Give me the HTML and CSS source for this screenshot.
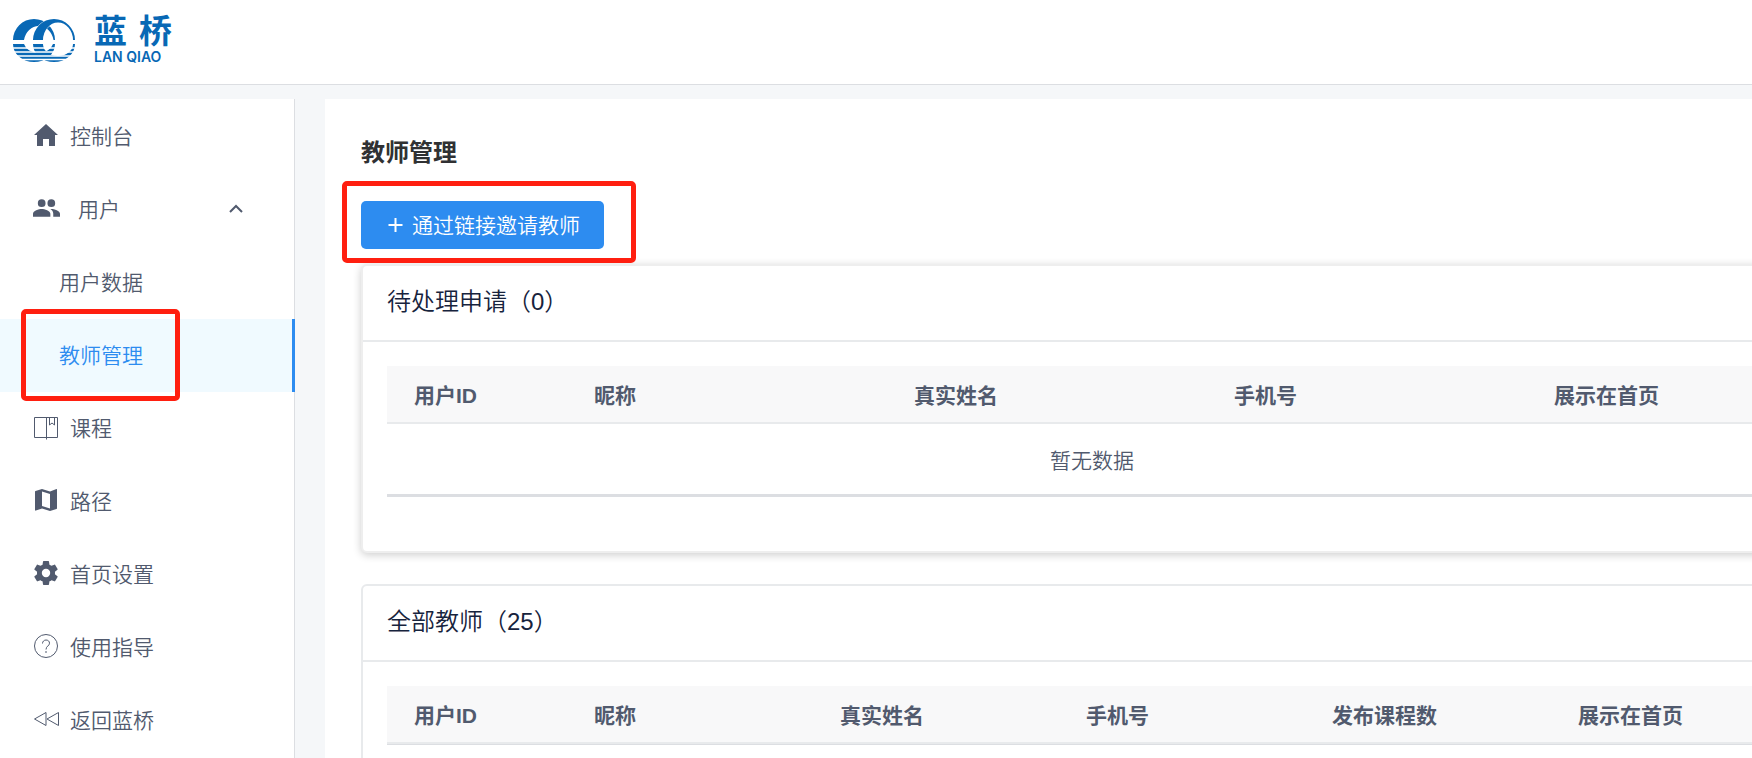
FILE: index.html
```html
<!DOCTYPE html>
<html lang="zh-CN">
<head>
    <meta charset="UTF-8">
    <meta name="viewport" content="width=device-width, initial-scale=1.0">
    <title>教师管理 - 蓝桥</title>
    <link rel="stylesheet" href="styles.css">
</head>
<body>
    <header class="header">
        <a class="logo" href="#">
            <svg class="logo-mark" viewBox="0 0 64 46" aria-hidden="true">
                <path d="M1 22A21 21 0 0 1 43 22H41.500A15 17 0 0 0 12 22z"/>
                <path class="ring-front" d="M21 22A21 21 0 0 1 63 22H61A15 17.500 0 0 0 31 22z"/>
                <path d="M1 26A21 18 0 0 0 43 26H41A15 12 0 0 1 12 26z"/>
                <path d="M21 26A21 18 0 0 0 63 26H61A15 12 0 0 1 31 26z"/>
                <path class="waves" d="M0 30h64M0 34h64M0 38h64M0 41.500h64"/>
            </svg>
            <span class="logo-text">
                <strong class="logo-cn"><span>蓝</span><span>桥</span></strong>
                <span class="logo-en">LAN QIAO</span>
            </span>
        </a>
    </header>

    <div class="layout">
        <nav class="sidebar">
            <a class="menu-item" href="#">
                <svg class="icon" viewBox="0 0 24 24"><path d="M12 1L0 12h3v11h6v-7h6v7h6V12h3z"/></svg>
                控制台
            </a>
            <button class="menu-item submenu" type="button" aria-expanded="true">
                <svg class="icon icon-users" viewBox="0 0 28 24"><path d="M19 11a4 4 0 1 0 0-8 4 4 0 0 0 0 8zM9 11a4 4 0 1 0 0-8 4 4 0 0 0 0 8zM9 13c-3 0-9 2-9 5v3h18v-3c0-3-6-5-9-5zM19 13h-1c2 1 3 3 3 5v3h7v-3c0-3-6-5-9-5z"/></svg>
                用户
                <svg class="arrow" viewBox="0 0 14 10"><path d="M1 9l6-6 6 6"/></svg>
            </button>
            <a class="menu-item child" href="#">用户数据</a>
            <a class="menu-item child active" href="#">教师管理<span class="mark mark-menu"></span></a>
            <a class="menu-item" href="#">
                <svg class="icon line" viewBox="0 0 24 24"><path d="M.5 2.500h23v20H.5zM12.500 2.500v22M15.500 3v7l2.500-2 2.500 2V3"/></svg>
                课程
            </a>
            <a class="menu-item" href="#">
                <svg class="icon" viewBox="0 0 24 24"><path fill-rule="evenodd" d="M22.500 1L16 3.500 8 1 1.500 3c-.3.100-.5.400-.5.700V22c0 .5.400.8.900.6L8 20.500l8 2.500 6.500-2c.3-.1.500-.4.500-.7V1.500c0-.4-.2-.6-.5-.5zM16 20.500L8 18V3.500L16 6z"/></svg>
                路径
            </a>
            <a class="menu-item" href="#">
                <svg class="icon" viewBox="2 2 20 20"><path d="M19.430 12.980c.04-.32.070-.64.070-.98s-.03-.66-.07-.98l2.110-1.650c.19-.15.240-.42.120-.64l-2-3.460c-.12-.22-.39-.3-.61-.22l-2.490 1c-.52-.4-1.080-.73-1.690-.98l-.38-2.650C14.460 2.180 14.250 2 14 2h-4c-.25 0-.46.180-.49.420l-.38 2.650c-.61.250-1.170.590-1.690.980l-2.490-1c-.23-.09-.49 0-.61.220l-2 3.460c-.13.220-.07.490.120.640l2.110 1.650c-.04.320-.07.650-.07.980s.03.660.070.980l-2.110 1.650c-.19.150-.24.420-.12.640l2 3.460c.12.220.390.300.610.220l2.490-1c.52.400 1.080.730 1.690.980l.38 2.650c.03.240.240.420.490.420h4c.25 0 .46-.18.490-.42l.38-2.650c.61-.25 1.170-.59 1.690-.98l2.490 1c.23.090.490 0 .61-.22l2-3.460c.12-.22.070-.49-.12-.64zM12 15.500a3.500 3.500 0 1 1 0-7 3.500 3.500 0 0 1 0 7z"/></svg>
                首页设置
            </a>
            <a class="menu-item" href="#">
                <svg class="icon line" viewBox="0 0 24 24"><circle cx="12" cy="12" r="11.500"/><path d="M8.500 9.500C8.500 7.500 10 6 12 6s3.500 1.300 3.500 3.200c0 2.800-3.500 2.800-3.500 6.300M12 17v2"/></svg>
                使用指导
            </a>
            <a class="menu-item" href="#">
                <svg class="icon line" viewBox="0 0 24 24"><path d="M12 5.500v13L.5 12zM24.500 5.500v13L13 12z"/></svg>
                返回蓝桥
            </a>
        </nav>

        <main class="content">
            <h1 class="title">教师管理</h1>
            <div class="toolbar">
                <button class="btn-primary" type="button">
                    <svg class="plus" viewBox="0 0 21 21"><path d="M10.500 5v14M3.500 12h14"/></svg>
                    通过链接邀请教师
                </button>
                <span class="mark mark-button"></span>
            </div>

            <section class="card raised">
                <h2 class="card-title">待处理申请（0）</h2>
                <div class="card-body">
                    <table class="table">
                        <colgroup>
                            <col class="col-id"><col class="col-wide"><col class="col-wide"><col class="col-wide"><col>
                        </colgroup>
                        <thead>
                            <tr><th>用户ID</th><th>昵称</th><th>真实姓名</th><th>手机号</th><th>展示在首页</th></tr>
                        </thead>
                        <tbody>
                            <tr><td class="empty" colspan="5">暂无数据</td></tr>
                        </tbody>
                    </table>
                </div>
            </section>

            <section class="card">
                <h2 class="card-title">全部教师（25）</h2>
                <div class="card-body">
                    <table class="table">
                        <colgroup>
                            <col class="col-id"><col><col><col><col><col>
                        </colgroup>
                        <thead>
                            <tr><th>用户ID</th><th>昵称</th><th>真实姓名</th><th>手机号</th><th>发布课程数</th><th>展示在首页</th></tr>
                        </thead>
                    </table>
                </div>
            </section>
        </main>
    </div>
</body>
</html>
```
FILE: styles.css
```css
* {
    box-sizing: border-box;
}

body {
    display: flex;
    flex-direction: column;
    height: 100vh;
    margin: 0;
    overflow: hidden;
    background-color: #f5f7f9;
    color: #515a6e;
    font-family: "Liberation Sans", "Noto Sans CJK SC", sans-serif;
    font-size: 21px;
    font-weight: 350;
}

a {
    color: inherit;
    text-decoration: none;
}

button {
    border: none;
    background: none;
    color: inherit;
    font: inherit;
    cursor: pointer;
}

.header {
    flex-shrink: 0;
    height: 85px;
    padding: 10px 12px;
    background-color: #fff;
    border-bottom: 1px solid #dcdee2;
}

.logo {
    display: inline-flex;
    gap: 18px;
    color: #0868b5;
}

.logo-mark {
    width: 64px;
    height: 46px;
    margin-top: 8px;
    fill: currentColor;
}

.ring-front {
    stroke: #fff;
    stroke-width: 1;
    paint-order: stroke;
}

.waves {
    stroke: #fff;
    stroke-width: 1.5;
}

.logo-text {
    display: flex;
    flex-direction: column;
    gap: 2px;
}

.logo-cn {
    display: flex;
    gap: 12px;
    font-family: "Noto Sans CJK SC", sans-serif;
    font-size: 33px;
    font-weight: 700;
    line-height: 38px;
}

.logo-en {
    font-family: Inter, sans-serif;
    font-size: 14px;
    font-weight: 600;
    line-height: 14px;
}

.layout {
    display: flex;
    flex: 1;
    gap: 30px;
    min-height: 0;
    padding-top: 14px;
}

.sidebar {
    flex: 0 0 295px;
    min-width: 0;
    padding-top: 1px;
    background-color: #fff;
    border-right: 1px solid #dcdee2;
}

.menu-item {
    position: relative;
    display: flex;
    align-items: center;
    gap: 12px;
    width: 100%;
    height: 73px;
    padding: 0 34px 4px;
}

.child {
    padding-left: 59px;
}

.submenu {
    gap: 18px;
    padding-left: 33px;
    padding-right: 51px;
}

.active {
    width: calc(100% + 1px);
    background-color: #f0faff;
    border-right: 3px solid #2d8cf0;
    color: #2d8cf0;
}

.icon {
    width: 24px;
    height: 24px;
    fill: currentColor;
    overflow: visible;
}

.icon-users {
    width: 27px;
}

.line {
    fill: none;
    stroke: currentColor;
    stroke-width: 1;
}

.arrow {
    width: 14px;
    height: 10px;
    margin-left: auto;
    fill: none;
    stroke: currentColor;
    stroke-width: 2;
}

.content {
    flex: 1;
    padding: 36px;
    background-color: #fff;
}

.title {
    margin: 0 0 30px;
    color: #303133;
    font-size: 24px;
    font-weight: 700;
    line-height: 36px;
}

.toolbar {
    position: relative;
    display: flex;
    margin-bottom: 15px;
}

.btn-primary {
    display: flex;
    align-items: center;
    gap: 6px;
    height: 48px;
    padding: 0 24px 3px;
    background-color: #2d8cf0;
    border-radius: 5px;
    color: #fff;
}

.plus {
    width: 21px;
    height: 21px;
    stroke: currentColor;
    stroke-width: 2;
}

/* red frames around the steps to follow */
.mark {
    position: absolute;
    border: 5px solid #ff1f10;
    border-radius: 5px;
    pointer-events: none;
}

.mark-menu {
    top: -10px;
    left: 21px;
    width: 159px;
    height: 92px;
    z-index: 1;
}

.mark-button {
    top: -20px;
    left: -19px;
    width: 294px;
    height: 82px;
    z-index: 1;
}

.card {
    width: 100%;
    min-width: 1462px;
    margin-bottom: 31px;
    background-color: #fff;
    border: 2px solid #e8eaec;
    border-radius: 6px;
}

.raised {
    border-color: #eee;
    box-shadow: 0 2px 9px rgba(0, 0, 0, 0.2);
}

.card-title {
    margin: 0;
    padding: 18px 24px 20px;
    border-bottom: 2px solid #e8eaec;
    color: #17233d;
    font-size: 24px;
    font-weight: 350;
    line-height: 36px;
}

.card-body {
    padding: 24px 24px 54px;
}

.table {
    width: 100%;
    table-layout: fixed;
    border-collapse: separate;
    border-spacing: 0;
    border-bottom: 1px solid #dcdee2;
}

.table th,
.table td {
    padding: 0 27px;
    border-bottom: 2px solid #e8eaec;
    text-align: left;
}

.table th {
    height: 58px;
    background-color: #f8f8f9;
    font-weight: 700;
}

.table .empty {
    height: 72px;
    border-bottom-color: #dcdee2;
    text-align: center;
}

.col-id {
    width: 180px;
}

.col-wide {
    width: 320px;
}
```
